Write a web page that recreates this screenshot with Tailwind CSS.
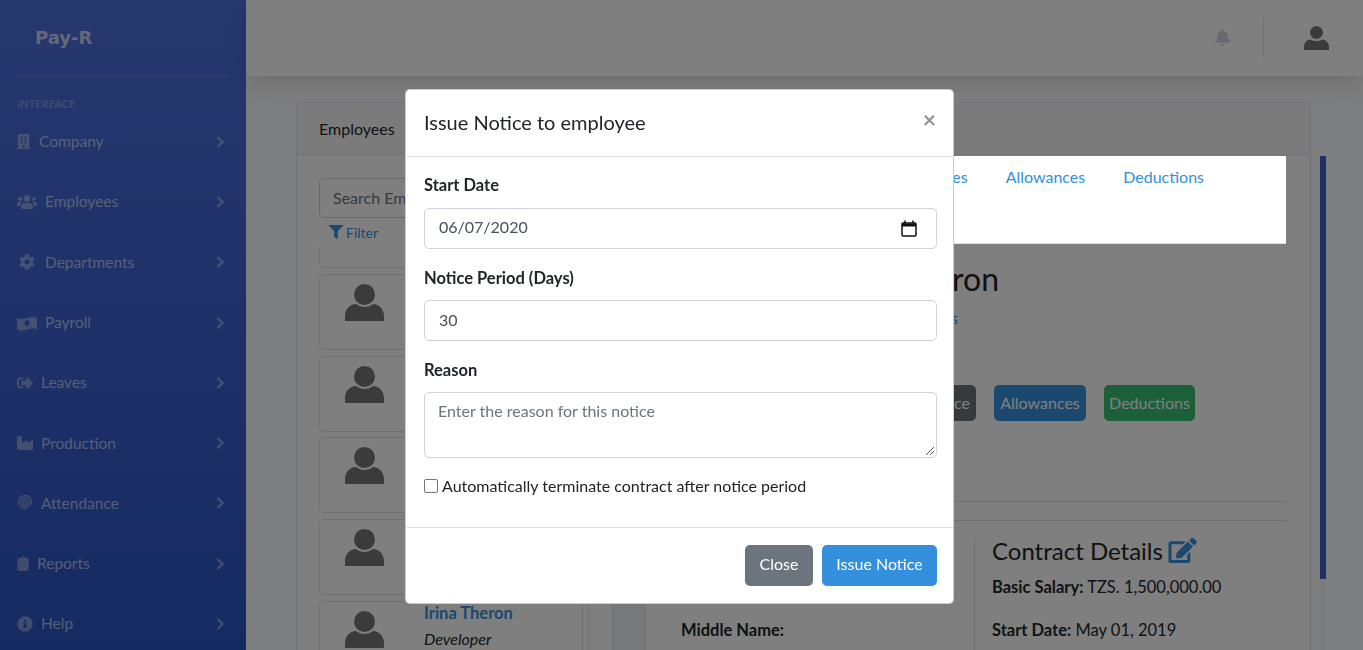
<!DOCTYPE html>
<html lang="en">
  <head>
    <meta charset="UTF-8" />
    <meta name="viewport" content="width=device-width, initial-scale=1.0" />
    <title>Pay-R</title>
    <script src="https://cdn.jsdelivr.net/npm/@tailwindcss/browser@4"></script>
  </head>
  <body class="h-[650px] overflow-hidden bg-[#ffffff] text-[16px] text-[#212529] font-['Lato','Noto_Sans',sans-serif]">
    <div class="flex h-[650px] overflow-hidden">
      <!-- sidebar -->
      <aside class="w-[246px] shrink-0 h-[650px] bg-gradient-to-b from-[#4c70dd] to-[#2d55c5] text-white/60 px-[17px]">
        <div class="h-[77px] border-b border-white/15 pl-[18px] pt-[24px] text-[18px] leading-[28px] font-bold font-['DejaVu_Sans',sans-serif] text-white/70">Pay-R</div>
        <div class="pt-[20px] text-[11px] leading-[14px] font-bold text-white/30">INTERFACE</div>
        <nav class="mt-[0.5px] flex flex-col text-[15.500px]">
          <a class="h-[60.3px] flex items-center gap-[9px]">
            <svg class="w-[13px] h-[17px] fill-white/40" viewBox="0 0 448 512"><path d="M436 480h-20V24c0-13-11-24-24-24H56C43 0 32 11 32 24v456H12c-7 0-12 5-12 12v20h448v-20c0-7-5-12-12-12zM128 76c0-7 5-12 12-12h40c7 0 12 5 12 12v40c0 7-5 12-12 12h-40c-7 0-12-5-12-12V76zm0 96c0-7 5-12 12-12h40c7 0 12 5 12 12v40c0 7-5 12-12 12h-40c-7 0-12-5-12-12v-40zm52 148h-40c-7 0-12-5-12-12v-40c0-7 5-12 12-12h40c7 0 12 5 12 12v40c0 7-5 12-12 12zm76 160h-64v-84c0-7 5-12 12-12h40c7 0 12 5 12 12v84zm64-172c0 7-5 12-12 12h-40c-7 0-12-5-12-12v-40c0-7 5-12 12-12h40c7 0 12 5 12 12v40zm0-96c0 7-5 12-12 12h-40c-7 0-12-5-12-12v-40c0-7 5-12 12-12h40c7 0 12 5 12 12v40zm0-96c0 7-5 12-12 12h-40c-7 0-12-5-12-12V76c0-7 5-12 12-12h40c7 0 12 5 12 12v40z"/></svg>
            <span class="flex-1">Company</span>
            <svg class="w-[8px] h-[12px] mr-[5px] text-white/40" viewBox="0 0 8 12"><path d="M1.5 1 6.5 6l-5 5" fill="none" stroke="currentColor" stroke-width="2.4"/></svg>
          </a>
          <a class="h-[60.3px] flex items-center gap-[8px]">
            <svg class="w-[20px] h-[16px] fill-white/40" viewBox="0 0 640 512"><path d="M96 224a64 64 0 1 0 0-128 64 64 0 0 0 0 128zm448 0a64 64 0 1 0 0-128 64 64 0 0 0 0 128zm32 32h-64c-18 0-34 7-45 19 40 22 69 62 75 109h66c18 0 32-14 32-32v-32c0-35-29-64-64-64zm-256 0a112 112 0 1 0 0-224 112 112 0 0 0 0 224zm77 32h-8c-21 10-44 16-69 16s-48-6-69-16h-8c-64 0-115 52-115 115v29c0 27 21 48 48 48h288c27 0 48-21 48-48v-29c0-63-51-115-115-115zm-224-13c-11-12-27-19-45-19H64c-35 0-64 29-64 64v32c0 18 14 32 32 32h66c6-47 35-87 75-109z"/></svg>
            <span class="flex-1">Employees</span>
            <svg class="w-[8px] h-[12px] mr-[5px] text-white/40" viewBox="0 0 8 12"><path d="M1.5 1 6.5 6l-5 5" fill="none" stroke="currentColor" stroke-width="2.4"/></svg>
          </a>
          <a class="h-[60.3px] flex items-center gap-[10px] pl-[2px]">
            <svg class="w-[16px] h-[16px] fill-white/40" viewBox="0 0 512 512"><path d="m487 316-43-24a194 194 0 0 0 0-71l43-24c5-3 7-9 5-14-11-35-30-67-55-94-4-4-10-5-15-2l-43 24c-18-15-39-27-61-35V27c0-6-4-10-9-11-37-9-75-8-110 0-5 1-9 5-9 11v49c-22 8-43 20-61 35L86 87c-5-3-11-2-15 2-25 27-44 59-55 94-2 5 0 11 5 14l43 24a194 194 0 0 0 0 71l-43 24c-5 3-7 9-5 14 11 35 30 67 55 94 4 4 10 5 15 2l43-24c18 15 39 27 61 35v50c0 5 4 10 9 11 37 8 75 8 110 0 5-1 9-6 9-11v-50c22-8 43-20 61-35l43 24c5 3 11 2 15-2 25-27 44-59 55-94 2-5 0-11-5-14zM256 336a80 80 0 1 1 0-160 80 80 0 0 1 0 160z"/></svg>
            <span class="flex-1">Departments</span>
            <svg class="w-[8px] h-[12px] mr-[5px] text-white/40" viewBox="0 0 8 12"><path d="M1.5 1 6.5 6l-5 5" fill="none" stroke="currentColor" stroke-width="2.4"/></svg>
          </a>
          <a class="h-[60.3px] flex items-center gap-[8px]">
            <svg class="w-[20px] h-[16px] fill-white/40" viewBox="0 0 640 512"><path d="M621 84c-39-16-78-20-117-20-124 0-248 63-372 63-31 0-62-4-93-15a20 20 0 0 0-39 17v317c0 13 7 25 19 30 39 16 78 20 117 20 124 0 248-63 372-63 31 0 62 4 93 15a20 20 0 0 0 39-17V114c0-13-7-25-19-30zM320 352c-44 0-80-43-80-96s36-96 80-96 80 43 80 96-36 96-80 96z"/></svg>
            <span class="flex-1">Payroll</span>
            <svg class="w-[8px] h-[12px] mr-[5px] text-white/40" viewBox="0 0 8 12"><path d="M1.5 1 6.5 6l-5 5" fill="none" stroke="currentColor" stroke-width="2.4"/></svg>
          </a>
          <a class="h-[60.3px] flex items-center gap-[8px]">
            <svg class="w-[16px] h-[14px] fill-white/40" viewBox="0 0 512 448"><path d="m503 208-168-168c-15-15-41-4-41 17v96H158c-13 0-24 11-24 24v96c0 13 11 24 24 24h136v96c0 21 26 32 41 17l168-168c12-9 12-25 0-34zM192 388v-40c0-7-5-12-12-12H96c-18 0-32-14-32-32V144c0-18 14-32 32-32h84c7 0 12-5 12-12V60c0-7-5-12-12-12H96C43 48 0 91 0 144v160c0 53 43 96 96 96h84c7 0 12-5 12-12z"/></svg>
            <span class="flex-1">Leaves</span>
            <svg class="w-[8px] h-[12px] mr-[5px] text-white/40" viewBox="0 0 8 12"><path d="M1.5 1 6.5 6l-5 5" fill="none" stroke="currentColor" stroke-width="2.4"/></svg>
          </a>
          <a class="h-[60.3px] flex items-center gap-[8px]">
            <svg class="w-[16px] h-[16px] fill-white/40" viewBox="0 0 512 512"><path d="M475 164 336 252v-68c0-19-21-30-37-20l-139 88V56c0-13-11-24-24-24H24C11 32 0 43 0 56v400c0 13 11 24 24 24h464c13 0 24-11 24-24V184c0-19-21-30-37-20z"/></svg>
            <span class="flex-1">Production</span>
            <svg class="w-[8px] h-[12px] mr-[5px] text-white/40" viewBox="0 0 8 12"><path d="M1.5 1 6.5 6l-5 5" fill="none" stroke="currentColor" stroke-width="2.4"/></svg>
          </a>
          <a class="h-[60.3px] flex items-center gap-[8px]">
            <svg class="w-[16px] h-[16px] text-white/40" viewBox="0 0 16 16" fill="none" stroke="currentColor" stroke-width="1.3"><path d="M1.5 10V7a6.500 6.500 0 0 1 13 0v2.500M3.700 13V7a4.300 4.300 0 0 1 8.600 0v5M6 14.500V7a2 2 0 0 1 4 0v6.500M8 7v8"/></svg>
            <span class="flex-1">Attendance</span>
            <svg class="w-[8px] h-[12px] mr-[5px] text-white/40" viewBox="0 0 8 12"><path d="M1.5 1 6.5 6l-5 5" fill="none" stroke="currentColor" stroke-width="2.4"/></svg>
          </a>
          <a class="h-[60.3px] flex items-center gap-[8px]">
            <svg class="w-[12px] h-[15px] fill-white/40" viewBox="0 0 384 512"><path d="M336 64h-80a64 64 0 0 0-128 0H48C21 64 0 85 0 112v352c0 27 21 48 48 48h288c27 0 48-21 48-48V112c0-27-21-48-48-48zM192 40a24 24 0 1 1 0 48 24 24 0 0 1 0-48z"/></svg>
            <span class="flex-1">Reports</span>
            <svg class="w-[8px] h-[12px] mr-[5px] text-white/40" viewBox="0 0 8 12"><path d="M1.5 1 6.5 6l-5 5" fill="none" stroke="currentColor" stroke-width="2.4"/></svg>
          </a>
          <a class="h-[60.3px] flex items-center gap-[8px]">
            <svg class="w-[16px] h-[16px] fill-white/40" viewBox="0 0 512 512"><path d="M256 8a248 248 0 1 0 0 496 248 248 0 0 0 0-496zm0 110a42 42 0 1 1 0 84 42 42 0 0 1 0-84zm56 254c0 7-5 12-12 12h-88c-7 0-12-5-12-12v-24c0-7 5-12 12-12h12v-64h-12c-7 0-12-5-12-12v-24c0-7 5-12 12-12h64c7 0 12 5 12 12v100h12c7 0 12 5 12 12v24z"/></svg>
            <span class="flex-1">Help</span>
            <svg class="w-[8px] h-[12px] mr-[5px] text-white/40" viewBox="0 0 8 12"><path d="M1.5 1 6.5 6l-5 5" fill="none" stroke="currentColor" stroke-width="2.4"/></svg>
          </a>
        </nav>
      </aside>

      <div class="flex-1 min-w-0 bg-[#fbfcfe]">
        <!-- topbar -->
        <header class="h-[76px] bg-white shadow-[0_6px_24px_rgba(0,0,0,0.15)] flex items-center justify-end">
          <svg class="w-[15px] h-[17px] text-[#d1d3e2] fill-current mr-[33px] mt-[-2px]" viewBox="0 0 448 512"><path d="M224 512c35 0 64-29 64-64H160c0 35 29 64 64 64zm215-150c-19-21-55-52-55-154 0-78-54-140-128-155V32a32 32 0 0 0-64 0v21C118 68 64 130 64 208c0 102-36 133-55 154-6 6-9 14-9 22 0 16 13 32 32 32h384c19 0 32-16 32-32 0-8-3-16-9-22z"/></svg>
          <div class="w-px h-[41px] bg-[#e3e6f0] mr-[40px] mt-[-2px]"></div>
          <svg class="w-[25px] h-[24px] mr-[34px] fill-[#777777]" viewBox="0 0 25 24"><circle cx="12.500" cy="6.500" r="6.500"/><path d="M0 24v-3c0-4 3-7.500 7-7.500 1.500 1 3.500 1.600 5.500 1.600s4-.6 5.500-1.600c4 0 7 3.500 7 7.500v3z"/></svg>
        </header>

        <!-- page content -->
        <main class="pl-[50px] pr-[52px] pt-[26px]">
          <div class="w-[1015px] h-[600px] border border-[#e3e6f0] rounded-[5px] bg-white">
            <div class="h-[52px] bg-[#f7f7f7] border-b border-[#e3e6f0] pl-[22px] flex items-center">Employees</div>
            <div class="flex">
              <!-- employee list -->
              <div class="w-[292px] shrink-0 pl-[22px] pr-[5px] pt-[23px] border-r border-[#e3e6f0]">
                <div class="h-[40px] border border-[#ced4da] rounded-[5px] px-[13px] flex items-center text-[#6c757d]">Search Employees</div>
                <div class="pl-[10px] mt-[-1px] h-[30px] flex items-center gap-[3px] text-[14px] text-[#3490dc]">
                  <svg class="w-[14px] h-[14px] fill-current" viewBox="0 0 512 512"><path d="M487 0H25C3 0-8 27 8 41l184 184v205c0 8 4 15 10 20l80 56c16 11 38 0 38-20V225L504 41c16-14 5-41-17-41z"/></svg>
                  Filter
                </div>
                <div class="h-[22px] border border-t-0 border-[#dee2e6] rounded-b-[5px] w-[264px] mt-[-1px]"></div>
                <div class="mt-[6px] flex flex-col gap-[5.700px] w-[264px]">
                  <div class="h-[76px] border border-[#dee2e6] rounded-[5px] pl-[25px] pt-[9px]"><svg class="w-[39px] h-[37px] fill-[#777777]" viewBox="0 0 39 37"><circle cx="19.500" cy="10.500" r="10.500"/><path d="M0 37v-5c0-7 5-12 11-12 2.500 2 5.500 3 8.500 3s6-1 8.500-3c6 0 11 5 11 12v5z"/></svg></div>
                  <div class="h-[76px] border border-[#dee2e6] rounded-[5px] pl-[25px] pt-[9px]"><svg class="w-[39px] h-[37px] fill-[#777777]" viewBox="0 0 39 37"><circle cx="19.500" cy="10.500" r="10.500"/><path d="M0 37v-5c0-7 5-12 11-12 2.500 2 5.500 3 8.500 3s6-1 8.500-3c6 0 11 5 11 12v5z"/></svg></div>
                  <div class="h-[76px] border border-[#dee2e6] rounded-[5px] pl-[25px] pt-[9px]"><svg class="w-[39px] h-[37px] fill-[#777777]" viewBox="0 0 39 37"><circle cx="19.500" cy="10.500" r="10.500"/><path d="M0 37v-5c0-7 5-12 11-12 2.500 2 5.500 3 8.500 3s6-1 8.500-3c6 0 11 5 11 12v5z"/></svg></div>
                  <div class="h-[76px] border border-[#dee2e6] rounded-[5px] pl-[25px] pt-[9px]"><svg class="w-[39px] h-[37px] fill-[#777777]" viewBox="0 0 39 37"><circle cx="19.500" cy="10.500" r="10.500"/><path d="M0 37v-5c0-7 5-12 11-12 2.500 2 5.500 3 8.500 3s6-1 8.500-3c6 0 11 5 11 12v5z"/></svg></div>
                  <div class="h-[76px] border border-[#dee2e6] rounded-[5px] pl-[25px] pt-[9px] flex gap-[40px]">
                    <svg class="w-[39px] h-[37px] fill-[#777777]" viewBox="0 0 39 37"><circle cx="19.500" cy="10.500" r="10.500"/><path d="M0 37v-5c0-7 5-12 11-12 2.500 2 5.500 3 8.500 3s6-1 8.500-3c6 0 11 5 11 12v5z"/></svg>
                    <div class="mt-[-10px]">
                      <div class="font-bold text-[16.500px] text-[#3490dc] leading-[24px]">Irina Theron</div>
                      <div class="italic leading-[24px] mt-[2px]">Developer</div>
                    </div>
                  </div>
                </div>
              </div>

              <!-- employee details -->
              <div class="flex-1 min-w-0 pl-[23px] pr-[23px]">
                <div class="h-[89px]"></div>
                <div class="h-[258px] border-b border-[#dee2e6] text-right">
                  <div class="pt-[17px] pr-[288px] text-[32px] leading-[36px]">Irina Theron</div>
                  <div class="pt-[9px] pr-[329px] text-[#3490dc] leading-[24px]">Developer - Projects</div>
                  <div class="mt-[55px] flex justify-end gap-[18px] pr-[92px]">
                    <span class="h-[36px] px-[6px] flex items-center rounded-[5px] bg-[#6c757d] text-white">Issue Notice</span>
                    <span class="h-[36px] w-[92px] justify-center flex items-center rounded-[5px] bg-[#3490dc] text-white pb-[1px]">Allowances</span>
                    <span class="h-[36px] w-[91px] justify-center flex items-center rounded-[5px] bg-[#38c172] text-white pb-[1px]">Deductions</span>
                  </div>
                </div>
                <div class="h-[19px] border-b border-[#dee2e6]"></div>
                <div class="flex pt-[17px]">
                  <div class="w-[33px] shrink-0 h-[120px] border-l border-[#dee2e6] bg-[#edf0f3]"></div>
                  <div class="w-[330px] shrink-0 h-[120px] border-x border-[#dee2e6] pl-[35px] pt-[80px] font-bold text-[16.500px] leading-[24px]">Middle Name:</div>
                  <div class="pl-[17px]">
                    <div class="flex items-center gap-[5px] text-[24px] leading-[29px] mt-[-2px]">
                      Contract Details
                      <svg class="w-[29px] h-[25px] fill-[#3490dc]" viewBox="0 0 576 512"><path d="m403 80 91 91c4 4 4 10 0 14L273 406l-94 10c-13 2-23-9-22-22l11-94L388 80c4-4 11-4 15 0zm163-23-49-49a39 39 0 0 0-55 0l-36 36c-4 4-4 10 0 14l91 91c4 4 10 4 14 0l36-36a39 39 0 0 0-1-56zM384 346V448H64V128h230c3 0 6-1 8-3l40-40c8-8 2-21-8-21H48C21 64 0 85 0 112v352c0 27 21 48 48 48h352c27 0 48-21 48-48V306c0-11-13-16-20-9l-40 40c-3 2-4 6-4 9z"/></svg>
                    </div>
                    <div class="mt-[10px] leading-[24px] text-[16.500px]"><b>Basic Salary:</b> TZS. 1,500,000.00</div>
                    <div class="mt-[19px] leading-[24px] text-[16.500px]"><b>Start Date:</b> May 01, 2019</div>
                  </div>
                </div>
              </div>
            </div>
          </div>
        </main>
      </div>
    </div>

    <!-- scrollbar sits under the backdrop -->
    <div class="fixed left-[1320px] top-[156px] w-[6px] h-[494px] bg-[#f5f6f8]"><div class="h-[423px] bg-[#3f5ed0]"></div></div>

    <!-- backdrop -->
    <div class="fixed inset-0 bg-black/50"></div>

    <!-- tab strip stays above the backdrop -->
    <div class="fixed left-[612px] top-[156px] w-[674px] h-[88px] bg-white border-b border-[#dee2e6] flex justify-end gap-[38px] pr-[82px] pt-[12px] leading-[18px] text-[#3490dc]">
      <span>Leaves</span>
      <span>Allowances</span>
      <span>Deductions</span>
    </div>

    <!-- modal -->
    <div class="fixed left-[405px] top-[89px] w-[549px] h-[515px] bg-white rounded-[5px] border border-black/20 flex flex-col">
      <div class="h-[67px] shrink-0 border-b border-[#dee2e6] pl-[18px] pr-[18px] flex items-center justify-between">
        <h5 class="text-[20px] mt-[-2px]">Issue Notice to employee</h5>
        <span class="text-[23px] font-bold text-[#8f9295] leading-none mt-[-7px] mr-[-1px]">×</span>
      </div>
      <div class="flex-1 pl-[18px] pr-[16px] pt-[18px]">
        <label class="block font-bold text-[16.500px] leading-[20px]">Start Date</label>
        <div class="mt-[13px] h-[41px] border border-[#ced4da] rounded-[5px] pl-[14px] pr-[19px] pb-[3px] flex items-center justify-between text-[#495057]">
          <span>06/07/2020</span>
          <svg class="w-[16px] h-[17px] mt-[3px]" viewBox="0 0 16 17" fill="none" stroke="#111111" stroke-width="1.500"><rect x="1" y="3" width="14" height="13" rx="1"/><path d="M1 5h14" stroke-width="3"/><path d="M4 0.500v3M12 0.500v3"/></svg>
        </div>
        <label class="block font-bold text-[16.500px] leading-[20px] mt-[19px]">Notice Period (Days)</label>
        <div class="mt-[12px] h-[41px] border border-[#ced4da] rounded-[5px] pl-[14px] pb-[2px] flex items-center text-[#495057]">30</div>
        <label class="block font-bold text-[16.500px] leading-[20px] mt-[19px]">Reason</label>
        <div class="mt-[12px] h-[66px] border border-[#ced4da] rounded-[5px] pl-[13px] pt-[6px] text-[#6c757d] relative">
          Enter the reason for this notice
          <svg class="absolute right-[1px] bottom-[1px] w-[10px] h-[10px]" viewBox="0 0 10 10" stroke="#555555" stroke-width="1"><path d="M1 9 9 1M5 9l4-4"/></svg>
        </div>
        <div class="mt-[18px] flex items-center gap-[4px] leading-[20px]">
          <span class="w-[14px] h-[14px] border border-[#767676] rounded-[2px]"></span>
          Automatically terminate contract after notice period
        </div>
      </div>
      <div class="h-[76px] shrink-0 border-t border-[#dee2e6] px-[16px] flex items-center justify-end gap-[9px]">
        <span class="h-[41px] w-[68px] pb-[3px] flex items-center justify-center rounded-[5px] bg-[#6c757d] text-white">Close</span>
        <span class="h-[41px] w-[115px] pb-[3px] flex items-center justify-center rounded-[5px] bg-[#3490dc] text-white">Issue Notice</span>
      </div>
    </div>
  </body>
</html>
